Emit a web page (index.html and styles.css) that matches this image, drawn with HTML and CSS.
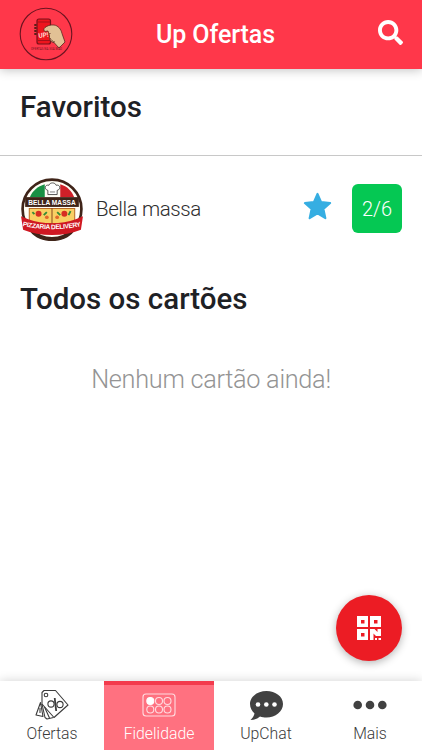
FILE: index.html
```html
<!DOCTYPE html>
<html lang="pt-BR">

<head>
    <meta charset="UTF-8">
    <meta name="viewport" content="width=device-width, initial-scale=1.0">
    <title>Up Ofertas</title>
    <link rel="stylesheet" href="styles.css">
</head>

<body>
    <header class="header">
        <svg class="logo" viewBox="0 0 54 54">
            <circle cx="27" cy="27" r="25.800" fill="none" stroke="#6b1420" stroke-width="1.100"/>
            <path d="M16.500 17v12" stroke="#5a2018" stroke-width="2.400" stroke-dasharray="2 1"/>
            <rect x="18" y="12" width="13.500" height="25" rx="2" fill="#ee141d" stroke="#761019" stroke-width="1.200"/>
            <path d="M18.500 15h12.500M18.500 33.500h12.500" stroke="#a51019"/>
            <path d="M26 20.500c2-1.500 5-3 9-2.500 4 .5 7 4 8 8.500l3 8.500-6 6-5-5.500c-3 0-5-3-4.500-6.500l-1.500-5-3 .5c-1.500-.5-1.500-3 0-4z" fill="#e2c195" stroke="#5c271f" stroke-width=".8"/>
            <path d="M29.500 27l2-.5M31 31c1 2 3 4 5 4" fill="none" stroke="#5c271f" stroke-width=".8"/>
            <text x="19.500" y="31" class="logo-up" transform="rotate(-8 20 30)">UP!</text>
            <text x="27.500" y="42.500" class="logo-text" textLength="31">OFERTAS NA SUA MÃO</text>
        </svg>
        <h1>Up Ofertas</h1>
        <svg class="search" viewBox="0 0 512 512">
            <path fill="#fff" d="M505 442.700L405.300 343c-4.500-4.500-10.600-7-17-7H372c27.600-35.300 44-79.700 44-128C416 93.100 322.900 0 208 0S0 93.100 0 208s93.100 208 208 208c48.300 0 92.700-16.400 128-44v16.300c0 6.400 2.500 12.500 7 17l99.700 99.700c9.400 9.400 24.600 9.400 33.900 0l28.300-28.300c9.400-9.400 9.400-24.600.1-34zM208 336c-70.700 0-128-57.200-128-128 0-70.700 57.200-128 128-128 70.700 0 128 57.200 128 128 0 70.700-57.200 128-128 128z"/>
        </svg>
    </header>

    <main class="main">
        <h2 class="title title-line">Favoritos</h2>
        <div class="card-row">
            <svg class="store-logo" viewBox="0 0 62 62">
                <circle cx="31" cy="31" r="28.500" fill="#fffdf5" stroke="#3f2419" stroke-width="2.600"/>
                <path d="M24 7v12.500H9.500C12 13.500 17 9 24 7z" fill="#189044"/>
                <path d="M39 7v12.500h13.500C50 13.500 46 9 39 7z" fill="#cf2028"/>
                <path d="M27 17v-4c-4-1-3-6 1-5 1-3 6-3 7 0 4-1 5 4 1 5v4z" fill="#fff" stroke="#333" stroke-width=".8"/>
                <path d="M29 14.500h5" stroke="#333" stroke-width=".6"/>
                <rect x="5" y="19.500" width="52" height="9.500" fill="#3f2419"/>
                <text x="31" y="27" class="store-name" textLength="46" lengthAdjust="spacingAndGlyphs">BELLA MASSA</text>
                <path d="M9 30.500h44V45H9z" fill="#f9cf63" stroke="#b86b27"/>
                <path d="M31 30v16" stroke="#8c4c22"/>
                <circle cx="18" cy="35.500" r="2.900" fill="#d72d22"/>
                <circle cx="43" cy="35.500" r="2.900" fill="#d72d22"/>
                <circle cx="26" cy="39" r="1.800" fill="#e1682b"/>
                <circle cx="36" cy="39" r="1.800" fill="#e1682b"/>
                <path d="M12 34l2 2M23 37l3-3M36 34l3 3M49 33l-2 4" stroke="#338b36" stroke-width="1.800"/>
                <path d="M10 48c8 15 34 15 42 0v5C43 65 19 65 10 53z" fill="#3f2419"/>
                <path d="M1 38l7 3c14 5 32 5 46 0l7-3-2 13c-16 7-40 7-56 0z" fill="#cf1822"/>
                <path id="ribbon" d="M2.500 47.500q28.500 6 57 0" fill="none"/>
                <text class="store-ribbon"><textPath href="#ribbon" textLength="57">PIZZARIA DELIVERY</textPath></text>
            </svg>
            <span class="store">Bella massa</span>
            <svg class="star" viewBox="0 0 28 28">
                <path d="M14 1.800l3.500 8 8.700.9-6.500 5.800 1.900 8.800-7.600-4.600-7.600 4.600 1.900-8.800-6.500-5.800 8.700-.9z" fill="#36aee2" stroke="#36aee2" stroke-width="2" stroke-linejoin="round"/>
            </svg>
            <span class="badge">2/6</span>
        </div>
        <h2 class="title">Todos os cartões</h2>
        <p class="empty">Nenhum cartão ainda!</p>
    </main>

    <button type="button" class="qr-button" aria-label="QR Code">
        <svg viewBox="0 0 24 24" fill="#fff">
            <path fill-rule="evenodd" d="M0 0h11v11H0zM4 4v3.500h3.500V4zM13 0h11v11H13zM17 4v3.500h3.500V4zM0 13h11v11H0zM4 17v3.500h3.500V17z"/>
            <path d="M13 13h4.500l3 3V13H24v7h-5l-2.500-2.500V24H13zM18 22h2v2h-2zM21.500 22h2.500v2h-2.500z"/>
        </svg>
    </button>

    <nav class="footer">
        <a class="tab">
            <svg viewBox="0 0 34 32" fill="none" stroke="#3b3b3b" stroke-width="1.100" stroke-linejoin="round">
                <path d="M7 3.500L9 1.500h11.500L33 16 19 28.500 7 15z"/>
                <circle cx="11" cy="6" r="1.800"/>
                <path d="M5.500 13.500L1 26l7 1.500zM7 15l3 13.500 2 1.500 6.500-1.500"/>
                <path d="M5 19v5M9.500 18l5 11"/>
                <circle cx="16" cy="15" r="3.100"/>
                <circle cx="25" cy="15.500" r="3.100"/>
                <path d="M19.700 9l1.500 13" stroke-width="1.800"/>
            </svg>
            <span>Ofertas</span>
        </a>
        <a class="tab active">
            <svg viewBox="0 0 34 32" fill="none" stroke="#ffdce0" stroke-width="1.100">
                <rect x="1" y="5" width="32" height="22" rx="3"/>
                <circle cx="8.300" cy="12" r="3.500" fill="#fff" stroke="#fff"/>
                <circle cx="17" cy="12" r="3.500"/>
                <circle cx="25.500" cy="12" r="3.500"/>
                <circle cx="8.300" cy="20.500" r="3.500"/>
                <circle cx="17" cy="20.500" r="3.500"/>
                <circle cx="25.500" cy="20.500" r="3.500"/>
            </svg>
            <span>Fidelidade</span>
        </a>
        <a class="tab">
            <svg viewBox="0 0 34 32">
                <path d="M17.500 2C8.500 2 1 7.500 1 15c0 3.800 1.900 7 4.500 9.500-.5 2.500-2 4.500-4 6.500 4 0 7-1.300 9.500-3.500 2 .7 4 1 6.500 1C26.500 28.500 34 22.500 34 15S26.500 2 17.500 2z" fill="#414141"/>
                <circle cx="9" cy="15.500" r="2.300" fill="#fff"/>
                <circle cx="17.300" cy="15.500" r="2.300" fill="#fff"/>
                <circle cx="25.500" cy="15.500" r="2.300" fill="#fff"/>
            </svg>
            <span>UpChat</span>
        </a>
        <a class="tab">
            <svg viewBox="0 0 34 32" fill="#414141">
                <circle cx="4.700" cy="16" r="4.300"/>
                <circle cx="17" cy="16" r="4.300"/>
                <circle cx="29.300" cy="16" r="4.300"/>
            </svg>
            <span>Mais</span>
        </a>
    </nav>
</body>

</html>
```

FILE: styles.css
```css
body {
    font-family: Roboto, 'Liberation Sans', sans-serif;
    margin: 0;
    height: 100vh;
    display: flex;
    flex-direction: column;
    background-color: #fff;
    overflow: hidden;
}

.header {
    height: 69px;
    box-sizing: border-box;
    flex-shrink: 0;
    padding: 0 19px 1px;
    display: grid;
    grid-template-columns: 56px 1fr 56px;
    align-items: center;
    background-color: #ff374a;
    box-shadow: 0 1px 10px rgba(0, 0, 0, 0.25);
}

.header h1 {
    margin: 0;
    color: #fff;
    font-size: 25px;
    letter-spacing: -0.1px;
    font-weight: 500;
    text-align: center;
    padding-left: 9px;
}

.logo {
    width: 54px;
    height: 54px;
}

.logo-up {
    font-size: 6.5px;
    font-weight: bold;
    fill: #ffd5cf;
}

.logo-text {
    font-size: 2.8px;
    text-anchor: middle;
    fill: #6b1420;
}

.search {
    width: 25px;
    height: 25px;
    justify-self: end;
    margin-bottom: 3px;
}

.main {
    flex-grow: 1;
}

.title {
    margin: 0;
    padding: 0 20px;
    font-size: 29.5px;
    line-height: 76px;
    font-weight: 500;
    color: #1e2125;
}

.title-line {
    height: 87px;
    box-sizing: border-box;
    border-bottom: 1px solid #c8c8c8;
}

.card-row {
    height: 105px;
    box-sizing: border-box;
    padding: 0 20px;
    display: flex;
    align-items: center;
}

.store-logo {
    width: 64px;
    height: 64px;
    flex-shrink: 0;
}

.store-name {
    font-family: 'Liberation Sans', sans-serif;
    font-size: 7px;
    font-weight: bold;
    text-anchor: middle;
    fill: #fff;
}

.store-ribbon {
    font-family: 'Liberation Sans', sans-serif;
    font-size: 6.3px;
    font-weight: bold;
    fill: #fff;
}

.store {
    flex-grow: 1;
    margin-left: 12px;
    font-size: 20.5px;
    letter-spacing: -0.4px;
    font-weight: 300;
    color: #2e2e2e;
}

.star {
    width: 29px;
    height: 29px;
    margin: 0 20px 5px 0;
}

.badge {
    width: 50px;
    height: 49px;
    border-radius: 6px;
    background-color: #05c853;
    color: #fff;
    font-size: 20px;
    font-weight: 300;
    line-height: 50px;
    text-align: center;
}

.empty {
    margin: 28px 0 0;
    font-size: 25.3px;
    letter-spacing: -0.3px;
    line-height: 30px;
    font-weight: 300;
    color: #949494;
    text-align: center;
}

.qr-button {
    position: absolute;
    right: 20px;
    bottom: 89px;
    width: 66px;
    height: 66px;
    padding: 0;
    border: none;
    border-radius: 50%;
    background-color: #ec1c24;
    box-shadow: 0 2px 9px rgba(0, 0, 0, 0.3);
    display: flex;
    align-items: center;
    justify-content: center;
}

.qr-button svg {
    width: 24px;
    height: 24px;
}

.footer {
    height: 69px;
    flex-shrink: 0;
    display: grid;
    grid-template-columns: 104px 110px 104px 104px;
    background-color: #fff;
    box-shadow: 0 0 10px rgba(0, 0, 0, 0.18);
}

.tab {
    box-sizing: border-box;
    padding-top: 8px;
    display: flex;
    flex-direction: column;
    align-items: center;
    color: #3b3b3b;
    font-size: 15.8px;
    font-weight: 300;
}

.tab svg {
    width: 34px;
    height: 32px;
}

.tab span {
    line-height: 25px;
}

.tab.active {
    background-color: #ff7180;
    border-top: 4px solid #f33b4d;
    padding-top: 4px;
    color: #fff;
}
```
